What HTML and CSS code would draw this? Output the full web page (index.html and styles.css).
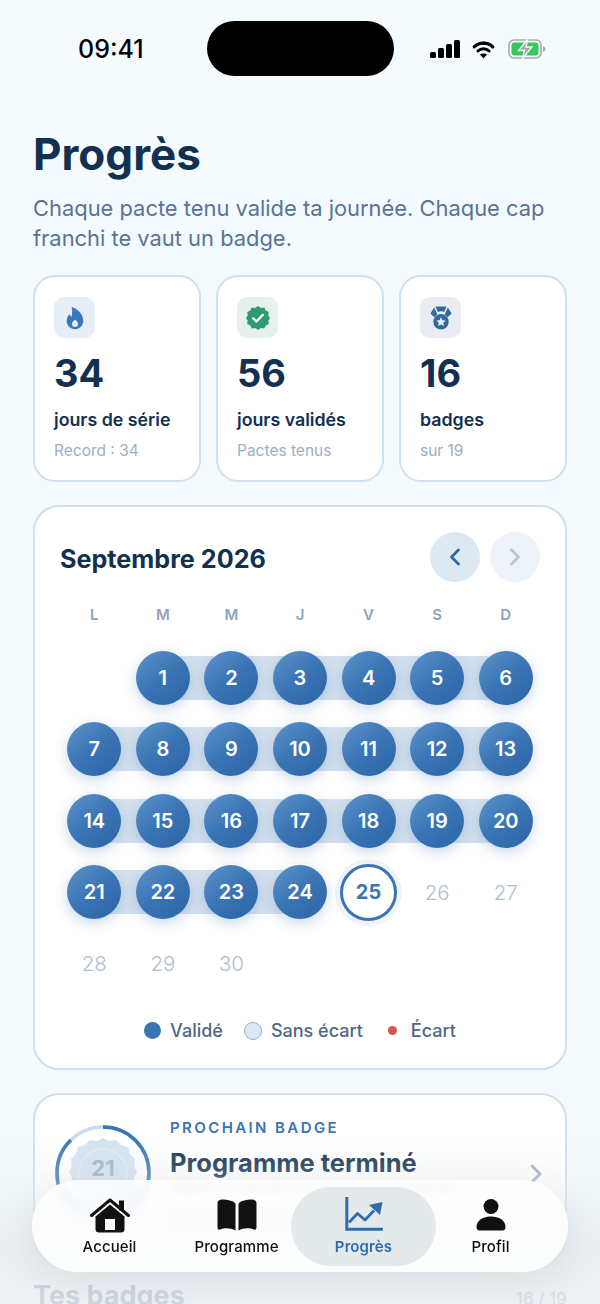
FILE: index.html
```html
<!DOCTYPE html>
<html lang="fr">
<head>
<meta charset="utf-8">
<title>Progrès</title>
<link rel="stylesheet" href="styles.css">
</head>
<body>
<div class="screen">
  <header class="status">
    <span class="time">09:41</span>
    <div class="island"></div>
    <div class="status-icons">
      <svg class="sig" viewBox="0 0 30 18" width="30" height="18"><rect x="0" y="12" width="6" height="6" rx="1.5"/><rect x="8" y="8" width="6" height="10" rx="1.5"/><rect x="16" y="4" width="6" height="14" rx="1.5"/><rect x="24" y="0" width="6" height="18" rx="1.5"/></svg>
      <svg class="wifi" viewBox="0 0 25 19" width="25" height="19"><path d="M12.5 3.2c3.6 0 6.9 1.400 9.300 3.700" fill="none" stroke="#000" stroke-width="3.2" stroke-linecap="round"/><path d="M12.500 3.200c-3.600 0-6.900 1.400-9.300 3.700" fill="none" stroke="#000" stroke-width="3.200" stroke-linecap="round"/><path d="M6.900 11c1.500-1.400 3.400-2.200 5.600-2.200s4.100.8 5.600 2.200" fill="none" stroke="#000" stroke-width="3" stroke-linecap="round"/><path d="M8.900 14.600 12.500 18.500l3.600-3.900c-1-.8-2.200-1.200-3.600-1.200s-2.600.4-3.600 1.200z"/></svg>
      <svg class="batt" viewBox="0 0 38 20" width="38" height="20"><rect x="1" y="1" width="32" height="18" rx="5" fill="none" stroke="#a6acaa" stroke-width="1.600"/><rect x="3.500" y="3.500" width="27" height="13" rx="3" fill="#34c759"/><path d="M35 7v6c1.500-.5 2.400-1.600 2.400-3S36.500 7.500 35 7z" fill="#a6acaa"/><path d="M19.500 0.500 10.500 11.500h6l-2 8 9.500-11.500h-6z" fill="#a6acaa" stroke="#f4fafd" stroke-width="1.300"/></svg>
    </div>
  </header>

  <main class="content">
    <h1 class="title">Progrès</h1>
    <p class="intro">Chaque pacte tenu valide ta journée. Chaque cap franchi te vaut un badge.</p>

    <section class="stats">
      <article class="stat">
        <div class="tile tile-blue">
          <svg viewBox="0 0 20 24" width="20" height="24"><path d="M6.500.8c5.600 2 11.800 6.900 11.800 14 0 4.800-3.700 8.400-8.300 8.400S1.700 19.600 1.700 15c0-2.800 1.200-5.200 3-7 .3 1.300.9 2.200 1.900 2.900C7.300 7.500 7.500 4 6.500.8z" fill="#3a78bd"/><path d="M10 13.800c1.800 1.400 3 2.700 3 4.300a3 3 0 0 1-6 0c0-1.700 1.300-3 3-4.300z" fill="#e6eef7"/></svg>
        </div>
        <div class="num">34</div>
        <div class="label">jours de série</div>
        <div class="sub">Record : 34</div>
      </article>
      <article class="stat">
        <div class="tile tile-green">
          <svg viewBox="0 0 24 24" width="24" height="24"><path d="M12 0l2.900 1.900 3.400-.5 1.400 3.200 3.100 1.500-.5 3.400L24 12l-1.700 2.500.5 3.400-3.100 1.500-1.400 3.200-3.400-.5L12 24l-2.900-1.900-3.400.5-1.400-3.200-3.100-1.500.5-3.400L0 12l1.700-2.500-.5-3.400 3.100-1.500 1.400-3.200 3.400.5z" fill="#2e9a70"/><path d="M7.300 12.300l3.200 3.200 6.200-6.600" fill="none" stroke="#fff" stroke-width="2.400" stroke-linecap="round" stroke-linejoin="round"/></svg>
        </div>
        <div class="num">56</div>
        <div class="label">jours validés</div>
        <div class="sub">Pactes tenus</div>
      </article>
      <article class="stat">
        <div class="tile tile-gray">
          <svg viewBox="0 0 22 24" width="22" height="24"><path d="M5.500.5h11l-2.300 5.400c-1-.4-2-.6-3.200-.6s-2.200.2-3.200.6z" fill="#33689f"/><path d="M4.200 1.600.4 7.500l4 3.800c.8-1.200 1.700-2.200 2.900-2.900z M17.800 1.600l3.800 5.900-4 3.800c-.8-1.200-1.700-2.200-2.900-2.900z" fill="#33689f"/><circle cx="11" cy="15.800" r="7.700" fill="#33689f"/><path d="M11 11.300l1.400 2.900 3.200.4-2.300 2.200.6 3.200-2.900-1.600-2.900 1.600.6-3.200-2.300-2.200 3.200-.4z" fill="#e9eef4"/></svg>
        </div>
        <div class="num">16</div>
        <div class="label">badges</div>
        <div class="sub">sur 19</div>
      </article>
    </section>

    <section class="calendar">
      <div class="cal-head">
        <h2 class="month">Septembre 2026</h2>
        <div class="cal-nav">
          <button class="round round-on"><svg viewBox="0 0 14 20" width="14" height="20"><path d="M10.500 3 3.500 10l7 7" fill="none" stroke="#33689f" stroke-width="2.800" stroke-linecap="round" stroke-linejoin="round"/></svg></button>
          <button class="round round-off"><svg viewBox="0 0 14 20" width="14" height="20"><path d="M3.500 3l7 7-7 7" fill="none" stroke="#b6c5d7" stroke-width="2.800" stroke-linecap="round" stroke-linejoin="round"/></svg></button>
        </div>
      </div>
      <div class="weekdays"><span>L</span><span>M</span><span>M</span><span>J</span><span>V</span><span>S</span><span>D</span></div>
      <div class="days">
        <div class="day"></div>
        <div class="day link"><span class="dot">1</span></div>
        <div class="day link"><span class="dot">2</span></div>
        <div class="day link"><span class="dot">3</span></div>
        <div class="day link"><span class="dot">4</span></div>
        <div class="day link"><span class="dot">5</span></div>
        <div class="day"><span class="dot">6</span></div>
        <div class="day link"><span class="dot">7</span></div>
        <div class="day link"><span class="dot">8</span></div>
        <div class="day link"><span class="dot">9</span></div>
        <div class="day link"><span class="dot">10</span></div>
        <div class="day link"><span class="dot">11</span></div>
        <div class="day link"><span class="dot">12</span></div>
        <div class="day"><span class="dot">13</span></div>
        <div class="day link"><span class="dot">14</span></div>
        <div class="day link"><span class="dot">15</span></div>
        <div class="day link"><span class="dot">16</span></div>
        <div class="day link"><span class="dot">17</span></div>
        <div class="day link"><span class="dot">18</span></div>
        <div class="day link"><span class="dot">19</span></div>
        <div class="day"><span class="dot">20</span></div>
        <div class="day link"><span class="dot">21</span></div>
        <div class="day link"><span class="dot">22</span></div>
        <div class="day link"><span class="dot">23</span></div>
        <div class="day"><span class="dot">24</span></div>
        <div class="day"><span class="today">25</span></div>
        <div class="day"><span class="later">26</span></div>
        <div class="day"><span class="later">27</span></div>
        <div class="day"><span class="later">28</span></div>
        <div class="day"><span class="later">29</span></div>
        <div class="day"><span class="later">30</span></div>
      </div>
      <div class="legend">
        <span class="key"><i class="mark mark-done"></i>Validé</span>
        <span class="key"><i class="mark mark-clean"></i>Sans écart</span>
        <span class="key"><i class="mark mark-miss"></i>Écart</span>
      </div>
    </section>

    <section class="next">
      <svg class="medal" viewBox="0 0 100 130" width="100" height="130">
        <path d="M50 15l6 3 7-1 5 5 7 2 2 7 5 5-1 7 3 6-3 6 1 7-5 5-2 7-7 2-5 5-7-1-6 3-6-3-7 1-5-5-7-2-2-7-5-5 1-7-3-6 3-6-1-7 5-5 2-7 7-2 5-5 7 1z" fill="#d4e2f0"/>
        <path d="M10 66q22 32 54 4" fill="none" stroke="#9ed8f0" stroke-width="6"/>
        <rect x="66" y="62" width="20" height="27" rx="8" fill="#bcd9f2"/>
        <circle cx="50" cy="50" r="24" fill="none" stroke="#e2ebf4" stroke-width="1.500"/>
        <circle cx="50" cy="50" r="46" fill="none" stroke="#c9dcee" stroke-width="3.500"/>
        <circle class="medal-arc" cx="50" cy="50" r="46" fill="none" stroke="#3a74b2" stroke-width="3.500" stroke-dasharray="253 289"/>
        <text class="medal-num" x="50" y="53" text-anchor="middle">21</text>
      </svg>
      <div class="next-body">
        <div class="eyebrow">PROCHAIN BADGE</div>
        <div class="next-title">Programme terminé</div>
        <div class="next-desc">Atteins le dernier jour de ton programme</div>
        <div class="next-left">Encore 9 jours de pactes tenus</div>
      </div>
      <svg class="next-chev" viewBox="0 0 14 22" width="14" height="22"><path d="M3 3l8 8-8 8" fill="none" stroke="#9fb0c4" stroke-width="3" stroke-linecap="round" stroke-linejoin="round"/></svg>
    </section>

    <div class="badges-head">
      <h2 class="badges-title">Tes badges</h2>
      <span class="badges-count">16 / 19</span>
    </div>
  </main>

  <div class="fade"></div>

  <nav class="tabbar">
    <a class="tab">
      <svg viewBox="0 0 42 36" width="42" height="36"><path d="M2.500 18.500 21 3l18.500 15.500" fill="none" stroke="#111" stroke-width="3" stroke-linecap="round" stroke-linejoin="round"/><rect x="30" y="3.500" width="5" height="10" fill="#111"/><path d="M6.500 19.500 21 7.500l14.500 12V32a3.500 3.500 0 0 1-3.500 3.500H10A3.500 3.500 0 0 1 6.500 32z" fill="#111"/><rect x="16" y="22" width="10" height="11" fill="#f4fafd"/></svg>
      <span>Accueil</span>
    </a>
    <a class="tab">
      <svg viewBox="0 0 40 32" width="40" height="32"><path d="M18.500 4.500C16 1.500 10 .5 5 .5 2.500.5.500 1.800.500 4v24.500c0 1.500 1 2.700 2.500 2 4.500-2 11-1.500 15.500 1z" fill="#111"/><path d="M21.500 4.500C24 1.500 30 .5 35 .5c2.500 0 4.500 1.300 4.500 3.500v24.500c0 1.500-1 2.700-2.500 2-4.500-2-11-1.500-15.500 1z" fill="#111"/></svg>
      <span>Programme</span>
    </a>
    <a class="tab tab-active">
      <svg viewBox="0 0 38 34" width="38" height="34"><path d="M1.800.5v30.700h34.500" fill="none" stroke="#2f6cad" stroke-width="3" stroke-linecap="square"/><path d="M4 24.500l8.500-9 7.500 6.500 9-9.500" fill="none" stroke="#2f6cad" stroke-width="2.800" stroke-linejoin="round"/><path d="M24 7 37.500 4 35 17z" fill="#2f6cad"/></svg>
      <span>Progrès</span>
    </a>
    <a class="tab">
      <svg viewBox="0 0 30 32" width="30" height="32"><circle cx="15" cy="7.500" r="7.500" fill="#111"/><path d="M.500 28c0-6.500 6.500-10.500 14.500-10.500S29.500 21.500 29.500 28c0 2-1 3.500-3 3.500H3.500c-2 0-3-1.500-3-3.500z" fill="#111"/></svg>
      <span>Profil</span>
    </a>
  </nav>
</div>
</body>
</html>
```
FILE: styles.css
```css
* { box-sizing: border-box; }
html, body { margin: 0; padding: 0; }
body { background: #f4fafd; font-family: "Inter", "Liberation Sans", sans-serif; color: #12304f; }
.screen { position: relative; width: 600px; height: 1304px; overflow: hidden; background: #f4fafd; }

.status { position: relative; height: 129px; display: flex; align-items: flex-start; justify-content: space-between; padding: 35px 54px 0 78px; }
.time { font-size: 25px; line-height: 28px; font-weight: 500; color: #000; }
.island { position: absolute; left: 207px; top: 21px; width: 187px; height: 55px; border-radius: 28px; background: #000; }
.status-icons { display: flex; align-items: center; gap: 12px; padding-top: 4px; }
.sig { fill: #000; margin-right: -1px; }
.wifi { fill: #000; }

.content { padding: 0 33px; }
.title { margin: 0; font-size: 44px; line-height: 50px; font-weight: 700; color: #12304f; }
.intro { margin: 14px 0 0; font-size: 21.900px; line-height: 30px; color: #567596; }

.stats { display: flex; gap: 15px; margin-top: 22px; }
.stat { width: 168px; height: 207px; padding: 20px 19px 0; background: #fff; border: 2px solid #cfe0ee; border-radius: 22px; }
.tile { width: 41px; height: 41px; border-radius: 10px; display: flex; align-items: center; justify-content: center; }
.tile-blue { background: #e6eef7; }
.tile-green { background: #e4f1ec; }
.tile-gray { background: #e8edf3; }
.num { margin-top: 13px; font-size: 38px; line-height: 44px; font-weight: 700; color: #12304f; }
.label { margin-top: 13px; font-size: 17.800px; line-height: 24px; font-weight: 600; color: #12304f; }
.sub { margin-top: 8px; font-size: 15.500px; line-height: 22px; color: #9cafc6; }

.calendar { margin-top: 23px; height: 565px; padding: 25px 25px 0; background: #fff; border: 2px solid #cfe0ee; border-radius: 26px; }
.cal-head { display: flex; align-items: center; justify-content: space-between; height: 50px; }
.month { margin: 0; padding-top: 3px; font-size: 25.200px; line-height: 30px; font-weight: 700; color: #12304f; }
.cal-nav { display: flex; gap: 10px; }
.round { width: 50px; height: 50px; padding: 0; border: 0; border-radius: 50%; display: flex; align-items: center; justify-content: center; }
.round-on { background: #dde9f2; }
.round-off { background: #eef3f9; }

.weekdays { display: grid; grid-template-columns: repeat(7, 1fr); margin-top: 23px; font-size: 15px; line-height: 20px; font-weight: 600; color: #8ea3bd; text-align: center; }
.days { display: grid; grid-template-columns: repeat(7, 1fr); grid-auto-rows: 71.500px; margin-top: 17px; }
.day { position: relative; display: flex; align-items: center; justify-content: center; }
.link::after { content: ""; position: absolute; left: 50%; top: 50%; width: 100%; height: 44px; margin-top: -22px; background: #d4e0ee; }
.dot { position: relative; z-index: 1; width: 54px; height: 54px; border-radius: 50%; display: flex; align-items: center; justify-content: center; background: linear-gradient(140deg, #5e94cb 0%, #3a74b4 50%, #2c64a4 100%); box-shadow: 0 4px 14px rgba(58, 116, 178, .28); color: #fff; font-size: 20px; font-weight: 600; }
.today { width: 57px; height: 57px; border-radius: 50%; display: flex; align-items: center; justify-content: center; background: #fff; border: 3px solid #3a74b2; box-shadow: 0 0 0 5px #eff4fa; color: #3a74b2; font-size: 20px; font-weight: 700; }
.later { font-size: 20.500px; font-weight: 300; color: #aebdd0; }

.legend { display: flex; justify-content: center; gap: 21px; margin-top: 19px; font-size: 18px; line-height: 24px; font-weight: 500; color: #4f6785; }
.key { display: flex; align-items: center; gap: 9px; }
.mark { display: block; border-radius: 50%; }
.mark-done { width: 17px; height: 17px; background: #3a74b2; }
.mark-clean { width: 18px; height: 18px; background: #dbe8f4; border: 1.500px solid #8ab2d9; }
.mark-miss { width: 9px; height: 9px; margin: 0 5px 0 4px; background: #d9534f; }

.next { position: relative; margin-top: 23px; height: 170px; padding: 21px 20px 0 18px; display: flex; gap: 17px; background: #fff; border: 2px solid #cfe0ee; border-radius: 26px; }
.medal { flex: none; margin-top: 7px; }
.medal-arc { transform: rotate(-90deg); transform-origin: 50px 50px; }
.medal-num { font-size: 22px; font-weight: 700; fill: #9db3cb; }
.next-body { flex: 1; }
.eyebrow { font-size: 15px; line-height: 24px; font-weight: 600; letter-spacing: 2.400px; color: #3a74b2; }
.next-title { margin-top: 8px; font-size: 25.500px; line-height: 30px; font-weight: 700; color: #12304f; }
.next-desc { margin-top: 0; font-size: 15px; line-height: 20px; color: #6f87a3; }
.next-left { margin-top: 10px; font-size: 18px; line-height: 22px; font-weight: 500; color: #3a74b2; }
.next-chev { position: absolute; right: 22px; top: 68px; }

.badges-head { display: flex; align-items: baseline; justify-content: space-between; margin-top: 18px; }
.badges-title { margin: 0; font-size: 27px; line-height: 30px; font-weight: 700; color: #12304f; }
.badges-count { font-size: 17px; font-weight: 600; color: #5f7790; }

.fade { position: absolute; left: 0; right: 0; bottom: 0; height: 170px; background: linear-gradient(to bottom, rgba(232, 236, 240, 0) 0%, rgba(232, 236, 240, .3) 30%, rgba(232, 236, 240, .82) 65%, rgba(238, 241, 244, .87) 100%); pointer-events: none; }

.tabbar { position: absolute; left: 32px; top: 1180px; width: 536px; height: 92px; padding: 0 14px; display: flex; border-radius: 46px; background: rgba(255, 255, 255, .84); -webkit-backdrop-filter: blur(5px); backdrop-filter: blur(5px); box-shadow: 0 12px 36px rgba(60, 80, 100, .1); }
.tab { position: relative; width: 127px; padding-top: 17px; display: flex; flex-direction: column; align-items: center; font-size: 15px; line-height: 18px; font-weight: 500; letter-spacing: .1px; color: #111; }
.tab svg { position: relative; height: 36px; flex: none; }
.tab span { position: relative; margin-top: 5px; }
.tab-active { color: #2f6cad; font-weight: 600; }
.tab-active::before { content: ""; position: absolute; left: -9px; right: -9px; top: 7px; height: 79px; border-radius: 40px; background: rgba(222, 228, 232, .82); }
```
